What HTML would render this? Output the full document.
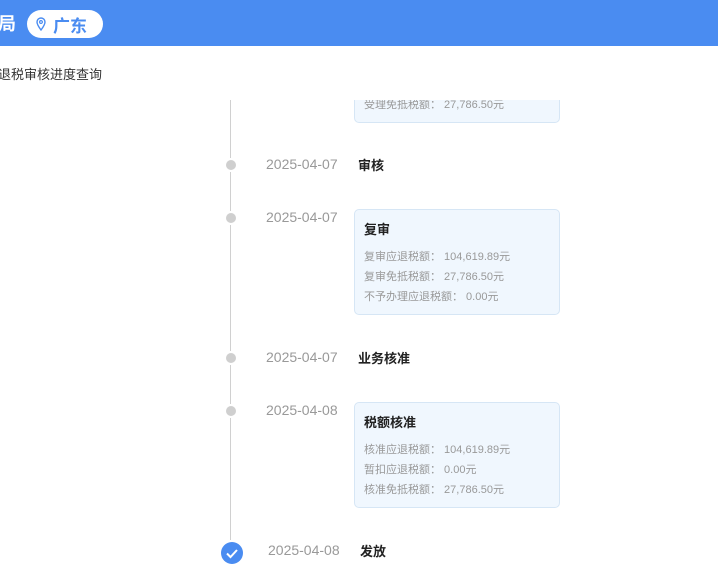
<!DOCTYPE html>
<html><head><meta charset="utf-8"><style>
*{margin:0;padding:0;box-sizing:border-box}
body{width:718px;height:576px;overflow:hidden;background:#fff;font-family:"Liberation Sans","Noto Sans CJK SC",sans-serif;position:relative}
.hd{position:absolute;left:0;top:0;width:718px;height:46px;background:#4a8cf1}
.hd .t{position:absolute;left:-2px;top:10px;color:#fff;font-size:18px;font-weight:bold}
.pill{position:absolute;left:27px;top:10px;width:76px;height:28px;border-radius:14px;background:#fff;color:#4a8cf1;font-size:17px;font-weight:bold}
.pill span{position:absolute;left:26px;top:2px}
.sub{position:absolute;left:-2px;top:64px;font-size:13px;color:#333}
.ln{position:absolute;left:230px;width:1px;background:#d0d0d0}
.dot{position:absolute;left:226px;width:10px;height:10px;border-radius:50%;background:#cfcfcf}
.dt{position:absolute;left:266px;font-size:14px;color:#999}
.tt{position:absolute;left:358px;font-size:13px;font-weight:bold;color:#222}
.card{position:absolute;left:354px;width:206px;background:#f0f7fe;border:1px solid #d6e6f5;border-radius:5px}
.card b{position:absolute;left:9px;top:9px;font-size:13px;color:#222}
.card p{position:absolute;left:9px;font-size:11px;color:#999;white-space:nowrap}
</style></head><body>
<div class="hd"><div class="t">局</div>
<div class="pill"><svg style="position:absolute;left:9px;top:7px" width="10" height="14" viewBox="0 0 10 14"><path d="M5 13C2 9 1 7 1 5a4 4 0 0 1 8 0c0 2-1 4-4 8z" fill="none" stroke="#4a8cf1" stroke-width="1.4"/><circle cx="5" cy="5" r="1.4" fill="none" stroke="#4a8cf1" stroke-width="1.2"/></svg><span>广东</span></div></div>
<div class="card" style="top:80px;height:43px"><p style="top:15px">受理免抵税额： 27,786.50元</p></div>
<div style="position:absolute;left:0;top:46px;width:718px;height:54px;background:#fff"></div>
<div class="sub">退税审核进度查询</div>
<div class="ln" style="top:100px;height:58px"></div>
<div class="dot" style="top:160px"></div>
<div class="ln" style="top:172px;height:39px"></div>
<div class="dot" style="top:213px"></div>
<div class="ln" style="top:225px;height:126px"></div>
<div class="dot" style="top:353px"></div>
<div class="ln" style="top:365px;height:39px"></div>
<div class="dot" style="top:406px"></div>
<div class="ln" style="top:418px;height:122px"></div>
<div class="dt" style="top:156px">2025-04-07</div><div class="tt" style="top:155px">审核</div>
<div class="dt" style="top:209px">2025-04-07</div>
<div class="card" style="top:209px;height:106px"><b>复审</b><p style="top:38px">复审应退税额： 104,619.89元</p><p style="top:58px">复审免抵税额： 27,786.50元</p><p style="top:78px">不予办理应退税额： 0.00元</p></div>
<div class="dt" style="top:349px">2025-04-07</div><div class="tt" style="top:348px">业务核准</div>
<div class="dt" style="top:402px">2025-04-08</div>
<div class="card" style="top:402px;height:106px"><b>税额核准</b><p style="top:38px">核准应退税额： 104,619.89元</p><p style="top:58px">暂扣应退税额： 0.00元</p><p style="top:78px">核准免抵税额： 27,786.50元</p></div>
<svg style="position:absolute;left:221px;top:542px" width="22" height="22" viewBox="0 0 22 22"><circle cx="11" cy="11" r="11" fill="#4a8cf1"/><path d="M6 11.5l3.5 3.5 6.5-7" fill="none" stroke="#fff" stroke-width="2"/></svg>
<div class="dt" style="top:542px;left:268px">2025-04-08</div><div class="tt" style="top:541px;left:360px">发放</div>
</body></html>
